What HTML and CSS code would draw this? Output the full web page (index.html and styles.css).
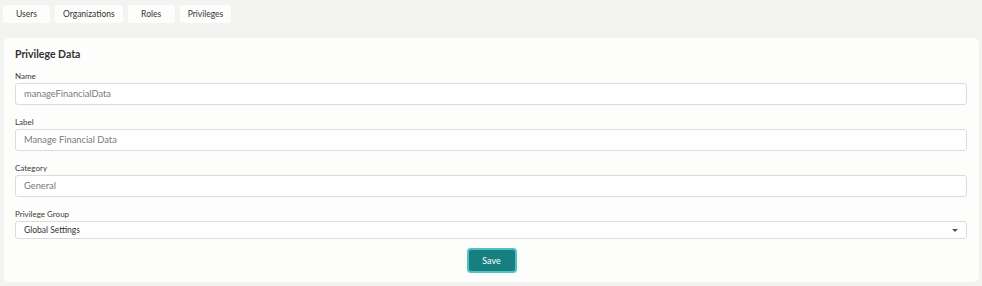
FILE: index.html
```html
<!DOCTYPE html>
<html>
<head>
<meta charset="utf-8">
<link rel="stylesheet" href="styles.css">
</head>
<body>
<nav class="tabs">
  <button class="tab">Users</button>
  <button class="tab">Organizations</button>
  <button class="tab">Roles</button>
  <button class="tab">Privileges</button>
</nav>
<section class="card">
  <h2 class="title">Privilege Data</h2>
  <div class="field">
    <label class="label">Name</label>
    <div class="input">manageFinancialData</div>
  </div>
  <div class="field">
    <label class="label">Label</label>
    <div class="input">Manage Financial Data</div>
  </div>
  <div class="field">
    <label class="label">Category</label>
    <div class="input">General</div>
  </div>
  <div class="field">
    <label class="label">Privilege Group</label>
    <div class="select"><span>Global Settings</span><span class="caret"></span></div>
  </div>
  <div class="actions">
    <button class="save">Save</button>
  </div>
</section>
</body>
</html>
```
FILE: styles.css
```css
html, body {
  margin: 0;
  padding: 0;
  background: #f3f3f1;
  font-family: Lato, "Open Sans", sans-serif;
}
.tabs {
  display: flex;
  gap: 5px;
  padding: 5px 3px 0 3px;
  height: 18px;
}
.tab {
  background: #fdfdfc;
  border: none;
  border-radius: 3px;
  height: 18px;
  min-width: 47px;
  padding: 0 8px;
  font-family: Lato, sans-serif;
  font-size: 8.5px;
  color: #333;
}
.card {
  margin: 15px 3px 0 4px;
  background: #fdfdfc;
  border-radius: 5px;
  padding: 8px 12px 10px 11px;
  height: 244px;
  box-sizing: border-box;
}
.title {
  margin: 0 0 9px 0;
  font-size: 10.5px;
  line-height: 16px;
  font-weight: 700;
  color: #333;
}
.field {
  margin-bottom: 12px;
}
.label {
  display: block;
  font-size: 8px;
  line-height: 10px;
  color: #3a3a3a;
  margin-bottom: 2px;
}
.input {
  height: 22px;
  box-sizing: border-box;
  border: 1px solid #dcdcdc;
  border-radius: 3px;
  padding: 0 8px;
  font-size: 9.3px;
  line-height: 20px;
  color: #7a7a7a;
  background: #fff;
}
.select {
  height: 18px;
  box-sizing: border-box;
  border: 1px solid #dcdcdc;
  border-radius: 3px;
  padding: 0 8px 0 8px;
  font-size: 8.5px;
  line-height: 16px;
  color: #333;
  background: #fff;
  display: flex;
  justify-content: space-between;
  align-items: center;
}
.caret {
  width: 0;
  height: 0;
  border-left: 3px solid transparent;
  border-right: 3px solid transparent;
  border-top: 3px solid #555;
}
.actions {
  display: flex;
  justify-content: center;
  margin-top: -3px;
}
.save {
  width: 50px;
  height: 25px;
  box-sizing: border-box;
  background: #177f80;
  color: #fff;
  border: 2px solid #4fc2c2;
  border-radius: 4px;
  font-family: Lato, sans-serif;
  font-size: 9px;
  margin-left: 1px;
}
```
